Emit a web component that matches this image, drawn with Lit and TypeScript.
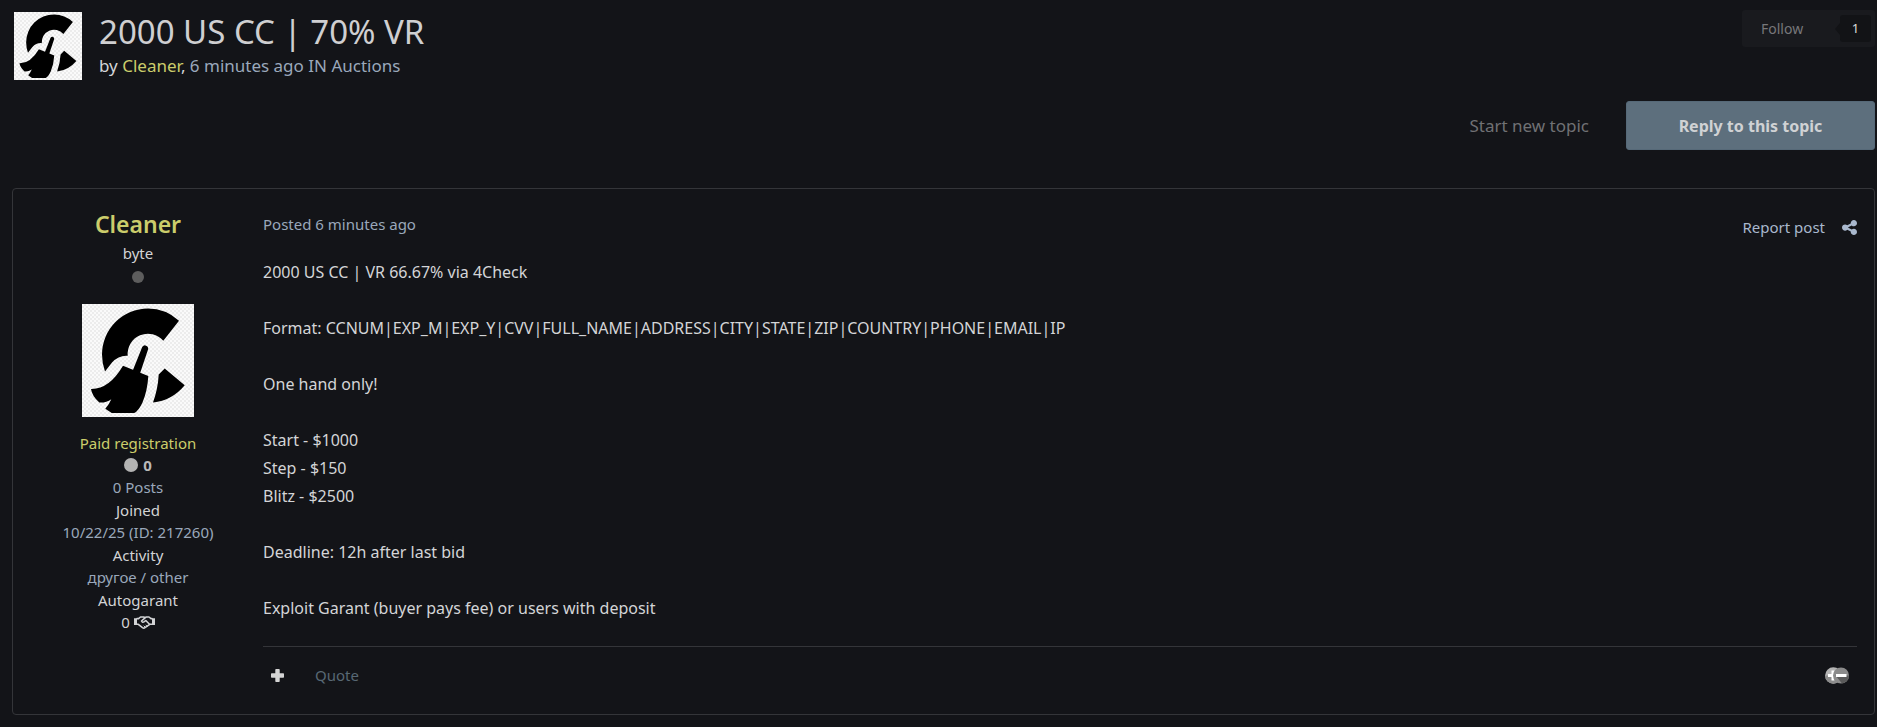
import { LitElement, html, css, svg } from "lit";
import { customElement } from "lit/decorators.js";

const POST_LINES = [
  "2000 US CC | VR 66.67% via 4Check",
  "",
  "Format: CCNUM|EXP_M|EXP_Y|CVV|FULL_NAME|ADDRESS|CITY|STATE|ZIP|COUNTRY|PHONE|EMAIL|IP",
  "",
  "One hand only!",
  "",
  "Start - $1000",
  "Step - $150",
  "Blitz - $2500",
  "",
  "Deadline: 12h after last bid",
  "",
  "Exploit Garant (buyer pays fee) or users with deposit",
];

const FIELDS = [
  { label: "Joined", value: "10/22/25 (ID: 217260)" },
  { label: "Activity", value: "другое / other" },
];

@customElement("user-avatar")
export class UserAvatar extends LitElement {
  static styles = css`
    :host {
      display: block;
      background: repeating-conic-gradient(#ececec 0 25%, #fafafa 0 50%) 0 0 / 4px 4px;
    }
    svg {
      display: block;
      width: 100%;
      height: 100%;
    }
  `;
  render() {
    return html`<svg viewBox="0 0 112 112" role="img" aria-label="Cleaner">
      ${svg`
        <path d="M97 16.3A46 46 0 0 0 66 4A46 46 0 0 0 20 50Q20 59 23 67L30 58Q37 50.5 45.7 51.3A20.3 20.3 0 0 1 81.3 36.3Z" />
        <path d="M60.2 42.4Q61.5 40.6 63.4 40.9Q66.3 41.5 66.2 44.6L57.8 69.5L50.6 66.5Z" />
        <path d="M41 61.3L66.3 71.5Q65.5 86 60.5 98Q56.5 106.5 52.3 108.5H29.7L23.3 104.3Q27 100 29.3 94.7Q24 98.5 17.3 98Q10 91.5 9 84.5Q27 85 41 61.3Z" />
        <path d="M82.7 64L102.7 80.7Q90 96 71 98Q76 84 76.7 70Z" />
      `}
    </svg>`;
  }
}

@customElement("topic-header")
export class TopicHeader extends LitElement {
  static styles = css`
    :host {
      display: flex;
      align-items: flex-start;
      gap: 17px;
    }
    user-avatar {
      width: 68px;
      height: 68px;
      margin-top: 2px;
    }
    .text {
      flex: 1;
    }
    h1 {
      margin: 0;
      font-size: 33px;
      line-height: 44px;
      font-weight: 400;
      color: #cfcfd1;
    }
    p {
      margin: 0;
      font-size: 17px;
      line-height: 24px;
      color: #d2d4d8;
    }
    .muted,
    .muted a {
      color: #9aa8bb;
    }
    a {
      color: #cbcd6b;
      text-decoration: none;
    }
    .follow {
      display: flex;
      align-items: center;
      justify-content: space-between;
      box-sizing: border-box;
      width: 133px;
      height: 37px;
      padding: 0 4px 0 19px;
      border-radius: 3px;
      background: #191a1e;
    }
    button {
      padding: 0;
      border: 0;
      background: none;
      font: inherit;
      font-size: 14px;
      color: #77777a;
    }
    .count {
      position: relative;
      width: 31px;
      border-radius: 3px;
      background: #121316;
      color: #dcdcdc;
      font-size: 13px;
      line-height: 27px;
      text-align: center;
    }
    .count::before {
      content: "";
      position: absolute;
      left: -5px;
      top: 8px;
      border: solid transparent;
      border-width: 6px 5px 6px 0;
      border-right-color: #121316;
    }
  `;
  render() {
    return html`
      <user-avatar></user-avatar>
      <div class="text">
        <h1>2000 US CC | 70% VR</h1>
        <p>
          by <a href="#">Cleaner</a>,
          <span class="muted">6 minutes ago IN <a href="#">Auctions</a></span>
        </p>
      </div>
      <div class="follow">
        <button type="button">Follow</button>
        <span class="count">1</span>
      </div>
    `;
  }
}

@customElement("author-panel")
export class AuthorPanel extends LitElement {
  static styles = css`
    :host {
      display: flex;
      flex-direction: column;
      align-items: center;
      font-size: 15px;
      line-height: 22px;
      color: #d2d3d5;
      text-align: center;
    }
    h2 {
      margin: 0;
      font-size: 23px;
      line-height: 32px;
      font-weight: 600;
    }
    a {
      color: #cbcd6b;
      text-decoration: none;
    }
    .status {
      width: 12px;
      height: 12px;
      margin: 7px 0 21px;
      border-radius: 50%;
      background: #5d5d5d;
    }
    .rank {
      margin-top: 2px;
    }
    user-avatar {
      width: 112px;
      height: 113px;
      margin-bottom: 15px;
    }
    .group {
      color: #cbcd6b;
    }
    .rep {
      display: flex;
      align-items: center;
      gap: 5px;
      font-weight: 700;
      color: #b9b9b9;
    }
    .rep i {
      width: 14px;
      height: 14px;
      border-radius: 50%;
      background: #b3b3b3;
    }
    .value {
      line-height: 23px;
      color: #9aa8bb;
    }
    .deals {
      display: flex;
      align-items: center;
      gap: 4px;
      line-height: 23px;
    }
    .deals svg {
      width: 21px;
      height: 13px;
    }
  `;
  render() {
    return html`
      <h2><a href="#">Cleaner</a></h2>
      <span class="rank">byte</span>
      <span class="status"></span>
      <user-avatar></user-avatar>
      <span class="group">Paid registration</span>
      <span class="rep"><i></i>0</span>
      <span class="value">0 Posts</span>
      ${FIELDS.map(
        (f) => html`<span>${f.label}</span><span class="value">${f.value}</span>`
      )}
      <span>Autogarant</span>
      <span class="deals">
        0
        <svg viewBox="0 0 21 13" fill="none" stroke="currentColor" stroke-width="1.6" stroke-linejoin="round" stroke-linecap="round" aria-hidden="true">
          <path d="M0 2.2H3V9H0ZM18 2.2H21V9H18Z" fill="currentColor" stroke="none" />
          <path d="M3 2.6H4.5L6.5 1H9.5L11 1.6L12.5 1H15L17 2.6H18" />
          <path d="M3 8.3H4.3L8.5 11.7Q9.8 12.6 11 11.7L15.8 8.3H18" />
          <path d="M11 1.8L7.5 5Q8.3 7 10.3 5.7L11.8 4.5L15.5 8.2" />
          <path d="M12 9.3L13.3 10.3M10 10L11.3 11.3" stroke-width="1" />
        </svg>
      </span>
    `;
  }
}

@customElement("topic-post")
export class TopicPost extends LitElement {
  static styles = css`
    :host {
      display: grid;
      grid-template-columns: 250px minmax(0, 1fr);
      border: 1px solid #343539;
      border-radius: 4px;
    }
    author-panel {
      padding-top: 19px;
    }
    .main {
      padding: 23px 17px 12px 0;
    }
    .meta {
      display: flex;
      align-items: flex-start;
      justify-content: space-between;
      font-size: 15px;
      line-height: 24px;
    }
    time {
      color: #9aa8bb;
    }
    .tools {
      display: flex;
      align-items: center;
      gap: 17px;
      padding-top: 3px;
      color: #a9b8cd;
    }
    .tools svg {
      display: block;
      width: 15px;
      height: 15px;
      fill: currentColor;
    }
    a {
      color: inherit;
      text-decoration: none;
    }
    .body {
      margin-top: 19px;
      padding-bottom: 24px;
      border-bottom: 1px solid #343539;
      font-size: 16px;
      line-height: 28px;
      color: #d4d5d7;
      overflow-wrap: anywhere;
    }
    .line {
      min-height: 28px;
    }
    .controls {
      display: flex;
      align-items: center;
      height: 54px;
      padding: 1px 8px 0;
    }
    button {
      display: block;
      padding: 0;
      border: 0;
      background: none;
      color: #d4d4d4;
    }
    button svg {
      display: block;
    }
    .quote {
      flex: 1;
      padding-left: 31px;
      font-size: 15px;
      line-height: 24px;
      color: #586874;
    }
  `;
  render() {
    return html`
      <author-panel></author-panel>
      <div class="main">
        <div class="meta">
          <time>Posted 6 minutes ago</time>
          <div class="tools">
            <a href="#">Report post</a>
            <a href="#" aria-label="Share">
              <svg viewBox="0 128 1536 1536">
                <path d="M1216 1024q133 0 226.500 93.500t93.500 226.500-93.500 226.500-226.500 93.500-226.500-93.500-93.500-226.500q0-12 2-34l-360-180q-92 86-218 86-133 0-226.500-93.500t-93.500-226.500 93.500-226.500 226.500-93.500q126 0 218 86l360-180q-2-22-2-34 0-133 93.500-226.500t226.500-93.500 226.500 93.500 93.500 226.500-93.500 226.500-226.500 93.500q-126 0-218-86l-360 180q2 22 2 34t-2 34l360 180q92-86 218-86z" />
              </svg>
            </a>
          </div>
        </div>
        <div class="body">${POST_LINES.map((l) => html`<div class="line">${l}</div>`)}</div>
        <div class="controls">
          <button type="button" aria-label="Multiquote">
            <svg width="13" height="13" viewBox="0 0 13 13" fill="currentColor">
              <path d="M5 0H8Q8.7 0 8.7 .7V4.3H12.3Q13 4.3 13 5V8Q13 8.7 12.3 8.7H8.7V12.3Q8.7 13 8 13H5Q4.3 13 4.3 12.3V8.7H.7Q0 8.7 0 8V5Q0 4.3 .7 4.3H4.3V.7Q4.3 0 5 0Z" />
            </svg>
          </button>
          <a class="quote" href="#">Quote</a>
          <button type="button" aria-label="React">
            <svg width="24" height="17" viewBox="0 0 24 17">
              <circle cx="8.3" cy="8.5" r="8.2" fill="#b4b4b4" />
              <path d="M.1 8.5A8.2 8.2 0 0 0 16.5 8.5Z" fill="#8c8c8c" />
              <path d="M3 8.5H9M8 3.5V13.5" stroke="#fff" stroke-width="3" />
              <circle cx="16" cy="8.5" r="8" fill="#8b8b8b" />
              <path d="M10.5 8.5L17 16.5A8 8 0 0 0 24 8.5Z" fill="#5a5a5a" />
              <path d="M11 8.5H21.5" stroke="#fff" stroke-width="3" />
            </svg>
          </button>
        </div>
      </div>
    `;
  }
}

@customElement("app-root")
export class AppRoot extends LitElement {
  static styles = css`
    :host {
      display: block;
      box-sizing: border-box;
      min-height: 100vh;
      padding: 10px 2px 10px 12px;
      background: #131418;
      font-family: "Noto Sans", "Open Sans", sans-serif;
    }
    topic-header {
      padding-left: 2px;
    }
    .actions {
      display: flex;
      justify-content: flex-end;
      align-items: center;
      gap: 37px;
      margin: 21px 0 38px;
    }
    a {
      text-decoration: none;
      font-size: 17px;
      color: #707174;
    }
    button {
      width: 249px;
      height: 49px;
      border: 1px solid #566978;
      border-radius: 3px;
      background: #5d6f7d;
      color: #d0d2d4;
      font: 700 16px "Noto Sans", "Open Sans", sans-serif;
    }
  `;
  render() {
    return html`
      <topic-header></topic-header>
      <div class="actions">
        <a href="#">Start new topic</a>
        <button type="button">Reply to this topic</button>
      </div>
      <topic-post></topic-post>
    `;
  }
}
